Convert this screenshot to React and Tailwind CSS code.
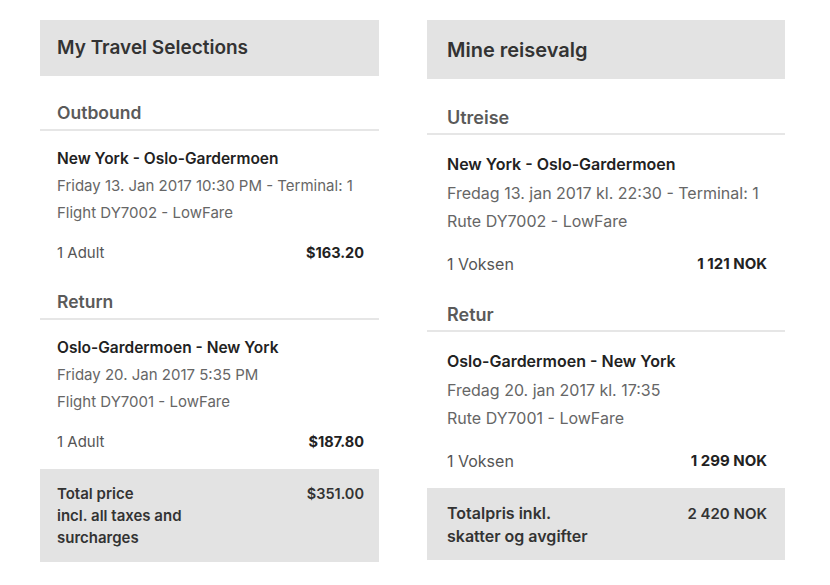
const left = {
  title: "My Travel Selections",
  sections: [
    {
      heading: "Outbound",
      route: "New York - Oslo-Gardermoen",
      lines: ["Friday 13. Jan 2017 10:30 PM - Terminal: 1", "Flight DY7002 - LowFare"],
      pax: "1 Adult",
      price: "$163.20",
    },
    {
      heading: "Return",
      route: "Oslo-Gardermoen - New York",
      lines: ["Friday 20. Jan 2017 5:35 PM", "Flight DY7001 - LowFare"],
      pax: "1 Adult",
      price: "$187.80",
    },
  ],
  total: ["Total price", "incl. all taxes and", "surcharges"],
  totalPrice: "$351.00",
};

const right = {
  title: "Mine reisevalg",
  sections: [
    {
      heading: "Utreise",
      route: "New York - Oslo-Gardermoen",
      lines: ["Fredag 13. jan 2017 kl. 22:30 - Terminal: 1", "Rute DY7002 - LowFare"],
      pax: "1 Voksen",
      price: "1 121 NOK",
    },
    {
      heading: "Retur",
      route: "Oslo-Gardermoen - New York",
      lines: ["Fredag 20. jan 2017 kl. 17:35", "Rute DY7001 - LowFare"],
      pax: "1 Voksen",
      price: "1 299 NOK",
    },
  ],
  total: ["Totalpris inkl.", "skatter og avgifter"],
  totalPrice: "2 420 NOK",
};

function SmallPanel({ data }) {
  return (
    <div className="w-[339px] flex flex-col">
      <div className="h-[56px] bg-[#e3e3e3] flex items-center px-[17px]">
        <h2 className="text-[19px] font-semibold text-[#333]">{data.title}</h2>
      </div>
      {data.sections.map((s, i) => (
        <div key={i} className={i === 0 ? "mt-[25px]" : "mt-[24px]"}>
          <div className="border-b-2 border-[#e6e6e6] pb-[4px] px-[17px]">
            <h3 className="text-[17.5px] leading-[24px] font-semibold text-[#5a5a5a]">{s.heading}</h3>
          </div>
          <div className="px-[17px] pr-[15px] mt-[14px] text-[15px] leading-[27px]">
            <div className="text-[15.5px] font-semibold text-[#222]">{s.route}</div>
            {s.lines.map((l, j) => (
              <div key={j} className="text-[#666]">{l}</div>
            ))}
            <div className="mt-[13px] flex justify-between">
              <span className="text-[#555]">{s.pax}</span>
              <span className="text-[14.5px] font-bold text-[#222]">{s.price}</span>
            </div>
          </div>
        </div>
      ))}
      <div className="mt-[14px] bg-[#e3e3e3] pt-[14px] pb-[13px] pl-[17px] pr-[15px] flex justify-between text-[15px] leading-[22px] font-semibold text-[#333]">
        <div>
          {data.total.map((t, i) => (
            <div key={i}>{t}</div>
          ))}
        </div>
        <div className="text-[14.5px]">{data.totalPrice}</div>
      </div>
    </div>
  );
}

function LargePanel({ data }) {
  return (
    <div className="w-[358px] flex flex-col">
      <div className="h-[59px] bg-[#e3e3e3] flex items-center px-[20px]">
        <h2 className="text-[20px] font-semibold text-[#333]">{data.title}</h2>
      </div>
      {data.sections.map((s, i) => (
        <div key={i} className={i === 0 ? "mt-[26px]" : "mt-[24px]"}>
          <div className="border-b-2 border-[#e6e6e6] pb-[3px] px-[20px]">
            <h3 className="text-[18px] leading-[25px] font-semibold text-[#5a5a5a]">{s.heading}</h3>
          </div>
          <div className="pl-[20px] pr-[18px] mt-[15px] text-[16px] leading-[28.5px]">
            <div className="font-semibold text-[#222]">{s.route}</div>
            {s.lines.map((l, j) => (
              <div key={j} className="text-[#666]">{l}</div>
            ))}
            <div className="mt-[14px] flex justify-between">
              <span className="text-[#555]">{s.pax}</span>
              <span className="text-[15px] font-bold text-[#222]">{s.price}</span>
            </div>
          </div>
        </div>
      ))}
      <div className="mt-[13px] bg-[#e3e3e3] pt-[14px] pb-[12px] pl-[20px] pr-[18px] flex justify-between text-[16px] leading-[23px] font-semibold text-[#333]">
        <div>
          {data.total.map((t, i) => (
            <div key={i}>{t}</div>
          ))}
        </div>
        <div className="text-[15px]">{data.totalPrice}</div>
      </div>
    </div>
  );
}

export default function App() {
  return (
    <div className="w-[830px] h-[585px] bg-white flex items-start gap-[48px] pl-[40px] pt-[20px] font-['Inter',sans-serif]">
      <SmallPanel data={left} />
      <LargePanel data={right} />
    </div>
  );
}
